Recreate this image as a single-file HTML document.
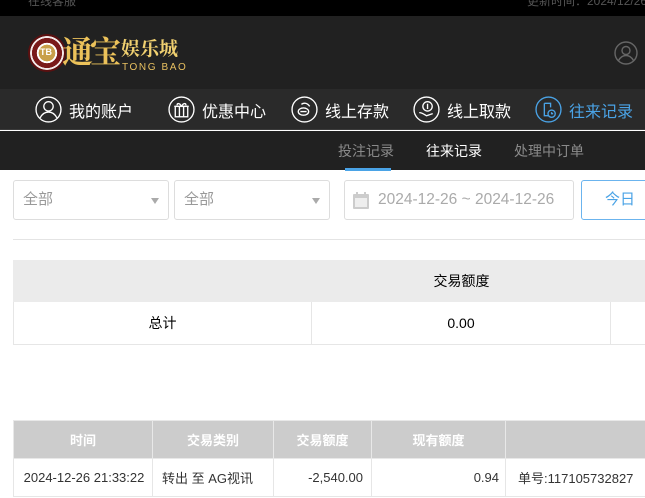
<!DOCTYPE html>
<html><head><meta charset="utf-8">
<style>
*{margin:0;padding:0;box-sizing:border-box}
body{width:645px;height:498px;overflow:hidden;background:#fff;font-family:"Liberation Sans","Noto Sans CJK SC",sans-serif;position:relative}
.top{position:absolute;left:0;top:0;width:645px;height:16px;background:#000;color:#555;font-size:12px;overflow:hidden;white-space:nowrap}
.hdr{position:absolute;left:0;top:16px;width:645px;height:73px;background:#212121}
.nav{position:absolute;left:0;top:89px;width:645px;height:41px;background:#2a2a2a;border-bottom:1px solid #3a3a3a}
.sub{position:absolute;left:0;top:131px;width:645px;height:39px;background:#212121}
.ni{position:absolute;top:6px;height:29px;display:flex;align-items:center;color:#fff;font-size:16px;white-space:nowrap}
.ni svg{margin-right:7px}
.si{position:absolute;top:10px;font-size:14px;color:#8a8a8a;white-space:nowrap}
.box{position:absolute;border:1px solid #ddd;border-radius:3px;height:40px;top:180px;font-size:15px;color:#999;padding-left:9px;line-height:38px;white-space:nowrap}
.arr{position:absolute;right:9px;top:17px;border-left:4px solid transparent;border-right:4px solid transparent;border-top:6px solid #aaa}
table{position:absolute;border-collapse:collapse;font-size:13px;table-layout:fixed}
td,th{border:1px solid #e6e6e6;text-align:center;white-space:nowrap;overflow:hidden}
</style></head><body>
<div class="top"><span style="position:absolute;left:28px;top:-8px">在线客服</span><span style="position:absolute;left:527px;top:-8px">更新时间：2024/12/26</span></div>
<div class="hdr">
 <div style="position:absolute;left:28px;top:18px;width:38px;height:38px;border-radius:50%;background:radial-gradient(circle,#c9a04a 0 34%,#fff 35% 42%,#7a1a1a 43% 62%,#f3eaea 63% 70%,#7a1a1a 71% 100%);border:2px solid #5a1010"></div>
 <div style="position:absolute;left:40px;top:31px;font-size:9px;color:#fff;font-weight:bold">TB</div>
 <div style="position:absolute;left:62px;top:14px;font-size:31px;line-height:40px;color:#ecc25a;font-family:'Noto Serif CJK SC',serif;font-weight:bold;letter-spacing:-3px">通宝</div>
 <div style="position:absolute;left:121px;top:20px;font-size:19px;line-height:24px;color:#f0d070;font-family:'Noto Serif CJK SC',serif;font-weight:bold">娱乐城</div>
 <div style="position:absolute;left:122px;top:46px;font-size:10px;color:#e8c060;letter-spacing:1.6px">TONG BAO</div>
 <svg style="position:absolute;left:614px;top:25px" width="24" height="24" viewBox="0 0 24 24" fill="none" stroke="#666" stroke-width="1.4"><circle cx="12" cy="12" r="11"/><circle cx="12" cy="9.5" r="4"/><path d="M4.5 19.5c2-3.5 4.5-5 7.5-5s5.5 1.5 7.5 5"/></svg>
</div>
<div class="nav">
 <div class="ni" style="left:35px"><svg width="27" height="27" viewBox="0 0 26 26" fill="none" stroke="#fff" stroke-width="1.3"><circle cx="13" cy="13" r="12"/><circle cx="13" cy="10" r="4.5"/><path d="M5 21c2-4 5-5.5 8-5.5s6 1.5 8 5.5"/></svg>我的账户</div>
 <div class="ni" style="left:168px"><svg width="27" height="27" viewBox="0 0 26 26" fill="none" stroke="#fff" stroke-width="1.3"><circle cx="13" cy="13" r="12"/><rect x="7" y="10" width="12" height="10"/><path d="M6 10h14M11 10v10M15 10v10M13 10c-2-4-5-3-4-1M13 10c2-4 5-3 4-1"/></svg>优惠中心</div>
 <div class="ni" style="left:291px"><svg width="27" height="27" viewBox="0 0 26 26" fill="none" stroke="#fff" stroke-width="1.3"><circle cx="13" cy="13" r="12"/><ellipse cx="12" cy="15" rx="5" ry="3.5"/><path d="M9 15h6M10 8c3-2 6-1 8 2"/></svg>线上存款</div>
 <div class="ni" style="left:413px"><svg width="27" height="27" viewBox="0 0 26 26" fill="none" stroke="#fff" stroke-width="1.3"><circle cx="13" cy="13" r="12"/><circle cx="14" cy="10" r="4.5"/><path d="M14 7.5v5M6 16c3 0 5 2 7 3l6-2"/></svg>线上取款</div>
 <div class="ni" style="left:535px;color:#4aa3e6"><svg width="27" height="27" viewBox="0 0 26 26" fill="none" stroke="#4aa3e6" stroke-width="1.3"><circle cx="13" cy="13" r="12"/><path d="M9 7h6v4M9 7v12h4"/><circle cx="16" cy="17" r="3.5"/><path d="M16 15.5v1.5h1.5"/></svg>往来记录</div>
</div>
<div class="sub">
 <div class="si" style="left:338px">投注记录</div>
 <div class="si" style="left:426px;color:#fff">往来记录</div>
 <div style="position:absolute;left:345px;top:37px;width:46px;height:3px;background:#4aa3e6"></div>
 <div class="si" style="left:514px">处理中订单</div>
</div>
<div class="box" style="left:13px;width:156px">全部<div class="arr"></div></div>
<div class="box" style="left:174px;width:156px">全部<div class="arr"></div></div>
<div class="box" style="left:344px;width:230px;padding-left:33px;font-size:15.5px;color:#aaa">2024-12-26 ~ 2024-12-26
 <svg style="position:absolute;left:8px;top:11px" width="16" height="17" viewBox="0 0 16 17"><rect x="0" y="2" width="16" height="15" rx="1" fill="#ccc"/><rect x="2" y="6" width="12" height="9" fill="#eee"/><rect x="3" y="0" width="2" height="4" fill="#ccc"/><rect x="11" y="0" width="2" height="4" fill="#ccc"/></svg></div>
<div class="box" style="left:581px;width:80px;border-color:#6bb4ee;color:#4aa3e6;padding-left:23px">今日</div>
<div style="position:absolute;left:13px;top:239px;width:632px;height:1px;background:#e4e4e4"></div>
<table style="left:13px;top:260px;width:896px">
 <col style="width:298px"><col style="width:299px"><col style="width:299px">
 <tr style="height:41px;background:#ebebeb"><td colspan="3" style="border-color:#ebebeb;font-size:14px">交易额度</td></tr>
 <tr style="height:43px;font-size:14px"><td>总计</td><td>0.00</td><td></td></tr>
</table>
<table style="left:13px;top:420px;width:660px">
 <col style="width:139px"><col style="width:121px"><col style="width:98px"><col style="width:134px"><col style="width:168px">
 <tr style="height:38px;background:#ccc;color:#fff;font-weight:bold"><th style="border-color:#e8e8e8">时间</th><th style="border-color:#e8e8e8">交易类别</th><th style="border-color:#e8e8e8">交易额度</th><th style="border-color:#e8e8e8">现有额度</th><th style="border-color:#e8e8e8"></th></tr>
 <tr style="height:38px;color:#333"><td style="padding-left:2px">2024-12-26 21:33:22</td><td style="text-align:left;padding-left:9px">转出 至 AG视讯</td><td style="text-align:right;padding-right:8px">-2,540.00</td><td style="text-align:right;padding-right:6px">0.94</td><td style="text-align:left;padding-left:12px">单号:117105732827</td></tr>
</table>
</body></html>
